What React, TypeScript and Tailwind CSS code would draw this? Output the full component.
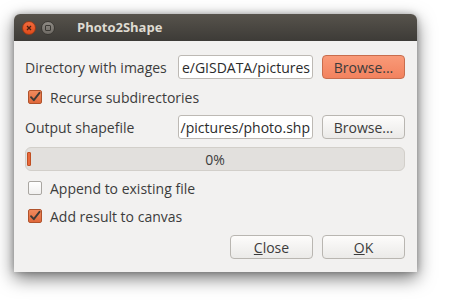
import React from "react";

const font = { fontFamily: '"Open Sans", "Noto Sans", sans-serif' };

function Check({ checked }: { checked: boolean }) {
  if (!checked) {
    return (
      <div className="w-[14px] h-[14px] rounded-[2px] border border-[#a9a6a1] bg-gradient-to-b from-[#ffffff] to-[#f1f0ef]" />
    );
  }
  return (
    <div className="w-[14px] h-[14px] rounded-[2px] border border-[#b0532c] bg-gradient-to-b from-[#f08a5d] to-[#e1683a] flex items-center justify-center">
      <svg width="12" height="12" viewBox="0 0 12 12">
        <path d="M2 6.2 L4.8 9.2 L10.5 1.8" fill="none" stroke="#3d3a36" strokeWidth="1.9" strokeLinecap="round" strokeLinejoin="round" />
      </svg>
    </div>
  );
}

function Btn({ children, orange }: { children: React.ReactNode; orange?: boolean }) {
  return (
    <div
      className={
        "w-[83px] h-[24px] rounded-[4px] border flex items-center justify-center text-[14px] text-[#3c3c3c] " +
        (orange
          ? "border-[#c86d4d] bg-gradient-to-b from-[#f99a78] to-[#f2825e]"
          : "border-[#b9b6b1] bg-gradient-to-b from-[#fdfcfb] to-[#ebeae8]")
      }
    >
      {children}
    </div>
  );
}

function Field({ text }: { text: string }) {
  return (
    <div className="w-[135px] h-[24px] rounded-[3px] border border-[#bdb9b4] bg-white flex items-center justify-end overflow-hidden pr-[2px] text-[14px] text-[#2b2b2b] whitespace-nowrap">
      {text}
    </div>
  );
}

export default function App() {
  return (
    <div className="w-[449px] h-[303px] bg-white overflow-hidden" style={font}>
      <div className="ml-[14px] mt-[14px] w-[403px] h-[258px] rounded-t-[6px] bg-[#f2f1f0] shadow-[0_6px_18px_rgba(0,0,0,0.55),0_0_6px_rgba(0,0,0,0.25)] flex flex-col">
        <div className="h-[27px] rounded-t-[6px] bg-gradient-to-b from-[#57534c] to-[#3d3b37] flex items-center pl-[8px]">
          <div className="w-[14px] h-[14px] rounded-full bg-gradient-to-b from-[#f26a3c] to-[#df4b19] border border-[#9a3a17] flex items-center justify-center">
            <svg width="6" height="6" viewBox="0 0 6 6">
              <path d="M1 1 L5 5 M5 1 L1 5" stroke="#4a2010" strokeWidth="1.3" />
            </svg>
          </div>
          <div className="ml-[5px] w-[14px] h-[14px] rounded-full bg-gradient-to-b from-[#8e8a84] to-[#6f6b65] border border-[#3a3833] flex items-center justify-center">
            <div className="w-[6px] h-[6px] border border-[#3b3934] rounded-[1px]" />
          </div>
          <div className="ml-[22px] text-[13px] font-bold text-[#dfdbd2]">Photo2Shape</div>
        </div>

        <div className="flex flex-col pl-[11px] pr-[12px] text-[14px] text-[#3c3c3c]">
          <div className="mt-[14px] h-[24px] flex items-center">
            <div className="w-[153px]">Directory with images</div>
            <Field text="e/GISDATA/pictures" />
            <div className="ml-[9px]">
              <Btn orange>Browse...</Btn>
            </div>
          </div>

          <div className="mt-[6px] h-[24px] flex items-center pl-[3px]">
            <Check checked />
            <div className="ml-[8px]">Recurse subdirectories</div>
          </div>

          <div className="mt-[6px] h-[24px] flex items-center">
            <div className="w-[153px]">Output shapefile</div>
            <Field text="/pictures/photo.shp" />
            <div className="ml-[9px]">
              <Btn>Browse...</Btn>
            </div>
          </div>

          <div className="mt-[8px] h-[24px] rounded-[6px] border border-[#d2cfca] bg-[#e2e0dd] relative flex items-center justify-center">
            <div className="absolute left-[1px] top-[4px] w-[4px] h-[14px] rounded-[1px] bg-[#e8683a] border border-[#c04f22]" />
            <span className="text-[14px]">0%</span>
          </div>

          <div className="mt-[5px] h-[24px] flex items-center pl-[3px]">
            <Check checked={false} />
            <div className="ml-[8px]">Append to existing file</div>
          </div>

          <div className="mt-[4px] h-[24px] flex items-center pl-[3px]">
            <Check checked />
            <div className="ml-[8px]">Add result to canvas</div>
          </div>

          <div className="mt-[7px] flex justify-end gap-[9px]">
            <Btn>
              <span><span className="underline">C</span>lose</span>
            </Btn>
            <Btn>
              <span><span className="underline">O</span>K</span>
            </Btn>
          </div>
        </div>
      </div>
    </div>
  );
}
